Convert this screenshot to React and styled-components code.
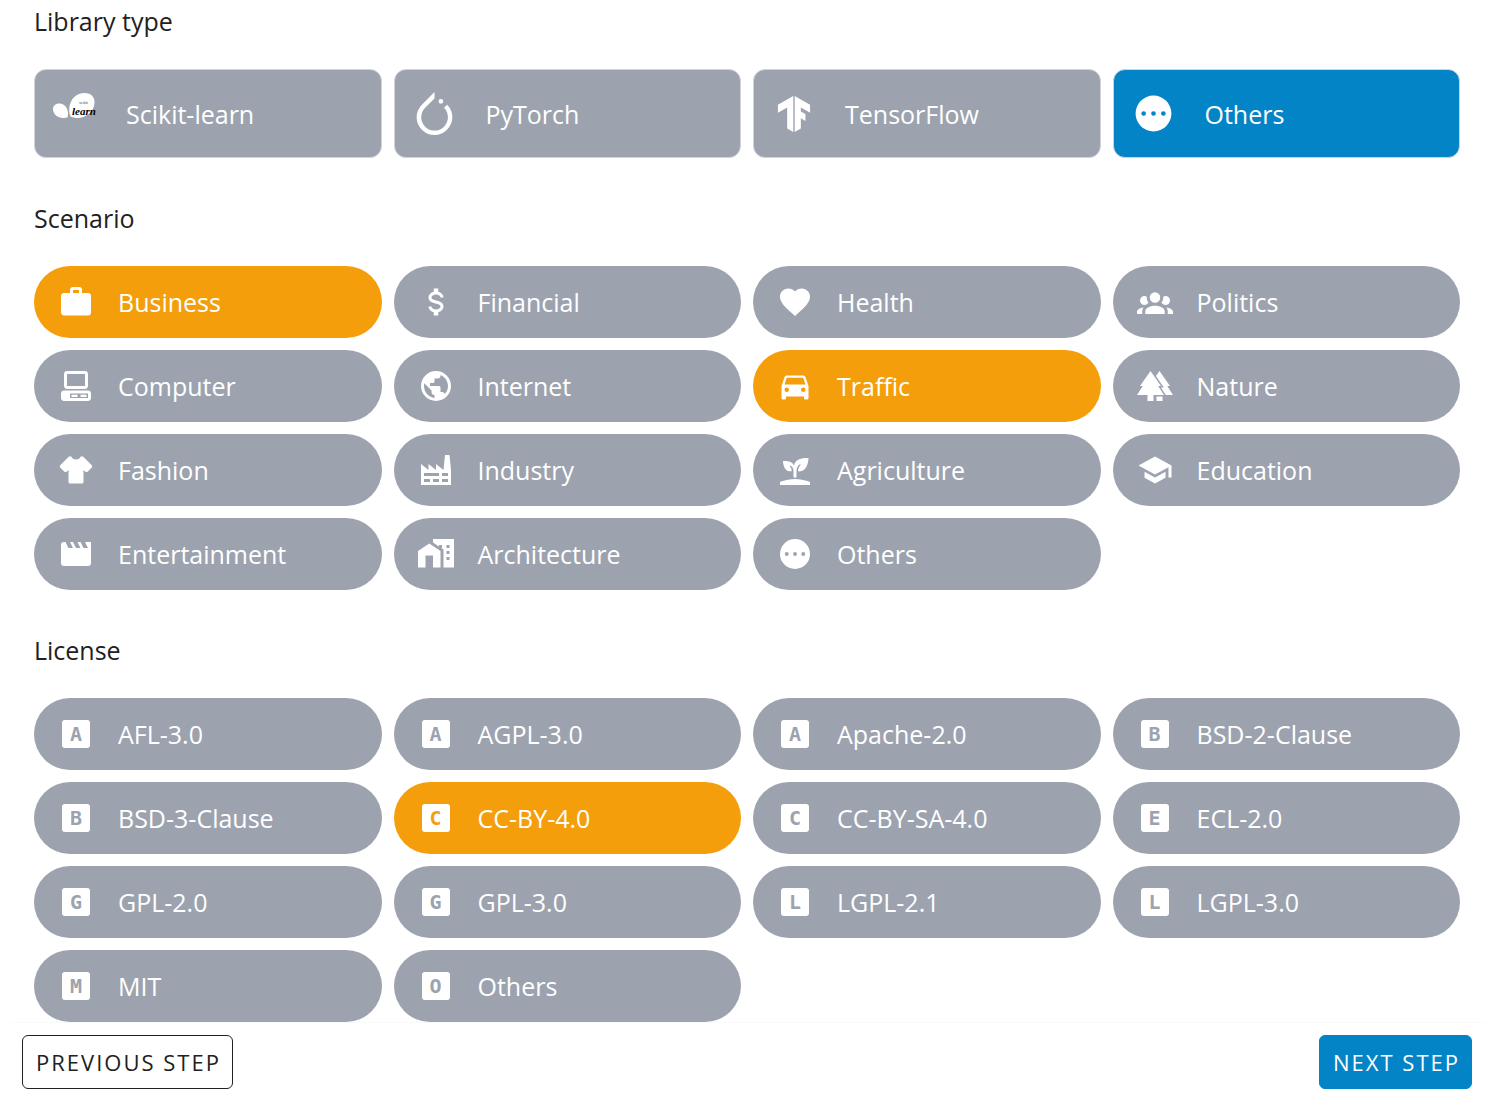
import React, { useState } from "react";
import styled, { createGlobalStyle } from "styled-components";

const GlobalStyle = createGlobalStyle`
  * { box-sizing: border-box; }
  body {
    margin: 0;
    background: #ffffff;
    color: #212121;
    font-family: "Open Sans", "Noto Sans", sans-serif;
  }
`;

const Page = styled.div`
  display: flex;
  flex-direction: column;
`;

const Content = styled.main`
  display: flex;
  flex-direction: column;
  gap: 42px;
  padding: 3px 34px 0;
`;

const Section = styled.section`
  display: flex;
  flex-direction: column;
  gap: 30px;
`;

const SectionTitle = styled.h2`
  margin: 0;
  font-size: 25px;
  line-height: 36px;
  font-weight: 400;
`;

const Options = styled.div`
  display: grid;
  grid-template-columns: repeat(4, minmax(0, 1fr));
  gap: 12px;
`;

const OptionButton = styled.button`
  display: flex;
  align-items: center;
  border: 0;
  color: #ffffff;
  font-family: inherit;
  font-size: 25px;
  line-height: 36px;
  text-align: left;
  white-space: nowrap;
  cursor: pointer;
`;

const LibraryCard = styled(OptionButton)`
  height: 89px;
  gap: 29px;
  padding: 0 18px;
  border: 1px solid #d1d5db;
  border-radius: 12px;
  background: ${(p) => (p.$selected ? "#0284c7" : "#9ca3af")};
`;

const Chip = styled(OptionButton)`
  height: 72px;
  gap: 24px;
  padding: 0 24px;
  border-radius: 36px;
  background: ${(p) => (p.$selected ? "#f59e0b" : "#9ca3af")};
`;

const LogoSlot = styled.span`
  display: flex;
  flex: none;
  align-items: center;
  justify-content: center;
  width: 44px;
  height: 44px;
`;

const Icon = styled.svg`
  flex: none;
  width: ${(p) => p.$size || 36}px;
  height: ${(p) => p.$size || 36}px;
  fill: currentColor;
`;

const LetterSlot = styled.span`
  display: flex;
  flex: none;
  align-items: center;
  justify-content: center;
  width: 36px;
  height: 36px;
`;

const LetterBox = styled.span`
  width: 28px;
  height: 28px;
  border-radius: 3px;
  background: #ffffff;
  color: ${(p) => (p.$selected ? "#f59e0b" : "#9ca3af")};
  font-family: "DejaVu Sans Mono", monospace;
  font-size: 20px;
  line-height: 28px;
  font-weight: 700;
  text-align: center;
`;

const Footer = styled.footer`
  display: flex;
  justify-content: space-between;
  margin: 0 10px;
  padding: 12px;
  border-top: 1px solid #f9fafb;
`;

const StepButton = styled.button`
  height: 54px;
  padding: 0 11px 0 13px;
  border: 1px solid ${(p) => (p.$primary ? "#0284c7" : "#212121")};
  border-radius: 6px;
  background: ${(p) => (p.$primary ? "#0284c7" : "#ffffff")};
  color: ${(p) => (p.$primary ? "#ffffff" : "#212121")};
  font-family: inherit;
  font-size: 22px;
  line-height: 32px;
  letter-spacing: 2px;
  text-transform: uppercase;
  cursor: pointer;
`;

const PATHS = {
  briefcase:
    "M10,2H14A2,2 0 0,1 16,4V6H20A2,2 0 0,1 22,8V19A2,2 0 0,1 20,21H4C2.89,21 2,20.1 2,19V8C2,6.89 2.89,6 4,6H8V4C8,2.89 8.89,2 10,2M14,6V4H10V6H14Z",
  dollar:
    "M7,15H9C9,16.08 10.37,17 12,17C13.63,17 15,16.08 15,15C15,13.9 13.96,13.5 11.76,12.97C9.64,12.44 7,11.78 7,9C7,7.21 8.47,5.69 10.5,5.18V3H13.5V5.18C15.53,5.69 17,7.21 17,9H15C15,7.92 13.63,7 12,7C10.37,7 9,7.92 9,9C9,10.1 10.04,10.5 12.24,11.03C14.36,11.56 17,12.22 17,15C17,16.79 15.53,18.31 13.5,18.82V21H10.5V18.82C8.47,18.31 7,16.79 7,15Z",
  heart:
    "M12,21.35L10.55,20.03C5.4,15.36 2,12.27 2,8.5C2,5.41 4.42,3 7.5,3C9.24,3 10.91,3.81 12,5.08C13.09,3.81 14.76,3 16.5,3C19.58,3 22,5.41 22,8.5C22,12.27 18.6,15.36 13.45,20.03L12,21.35Z",
  people:
    "M12,5.5A3.5,3.5 0 0,1 15.5,9A3.5,3.5 0 0,1 12,12.5A3.5,3.5 0 0,1 8.5,9A3.5,3.5 0 0,1 12,5.5M5,8C5.56,8 6.08,8.15 6.53,8.42C6.38,9.85 6.8,11.27 7.66,12.38C7.16,13.34 6.16,14 5,14A3,3 0 0,1 2,11A3,3 0 0,1 5,8M19,8A3,3 0 0,1 22,11A3,3 0 0,1 19,14C17.84,14 16.84,13.34 16.34,12.38C17.2,11.27 17.62,9.85 17.47,8.42C17.92,8.15 18.44,8 19,8M5.5,18.25C5.5,16.18 8.41,14.5 12,14.5C15.59,14.5 18.5,16.18 18.5,18.25V20H5.5V18.25M0,20V18.5C0,17.11 1.89,15.94 4.45,15.6C3.86,16.28 3.5,17.22 3.5,18.25V20H0M24,20H20.5V18.25C20.5,17.22 20.14,16.28 19.55,15.6C22.11,15.94 24,17.11 24,18.5V20Z",
  computer:
    "M6,2C4.89,2 4,2.89 4,4V12C4,13.11 4.89,14 6,14H18C19.11,14 20,13.11 20,12V4C20,2.89 19.11,2 18,2H6M6,4H18V12H6V4M4,15C2.89,15 2,15.89 2,17V20C2,21.11 2.89,22 4,22H20C21.11,22 22,21.11 22,20V17C22,15.89 21.11,15 20,15H4M8,17H20V20H8V17M9,17.75V19.25H13V17.75H9M15,17.75V19.25H19V17.75H15Z",
  earth:
    "M17.9,17.39C17.64,16.59 16.89,16 16,16H15V13A1,1 0 0,0 14,12H8V10H10A1,1 0 0,0 11,9V7H13A2,2 0 0,0 15,5V4.59C17.93,5.77 20,8.64 20,12C20,14.08 19.2,15.97 17.9,17.39M11,19.93C7.05,19.44 4,16.08 4,12C4,11.38 4.08,10.78 4.21,10.21L9,15V16A2,2 0 0,0 11,18M12,2A10,10 0 0,0 2,12A10,10 0 0,0 12,22A10,10 0 0,0 22,12A10,10 0 0,0 12,2Z",
  car: "M5,11L6.5,6.5H17.5L19,11M17.5,16A1.5,1.5 0 0,1 16,14.5A1.5,1.5 0 0,1 17.5,13A1.5,1.5 0 0,1 19,14.5A1.5,1.5 0 0,1 17.5,16M6.5,16A1.5,1.5 0 0,1 5,14.5A1.5,1.5 0 0,1 6.5,13A1.5,1.5 0 0,1 8,14.5A1.5,1.5 0 0,1 6.5,16M18.92,6C18.72,5.42 18.16,5 17.5,5H6.5C5.84,5 5.28,5.42 5.08,6L3,12V20A1,1 0 0,0 4,21H5A1,1 0 0,0 6,20V19H18V20A1,1 0 0,0 19,21H20A1,1 0 0,0 21,20V12L18.92,6Z",
  forest:
    "M16,12L9,2L2,12H3.86L0,18H7V22H11V18H18L14.14,12H16M20.14,12H22L15,2L12.61,5.41L17.92,13H15.97L19.19,18H24L20.14,12M13,19H17V22H13V19Z",
  shirt:
    "M16,21H8A1,1 0 0,1 7,20V12.07L5.7,13.12C5.31,13.5 4.68,13.5 4.29,13.12L1.46,10.29C1.07,9.9 1.07,9.27 1.46,8.88L7.34,3H9C9,4.1 10.34,5 12,5C13.66,5 15,4.1 15,3H16.66L22.54,8.88C22.93,9.27 22.93,9.9 22.54,10.29L19.71,13.12C19.32,13.5 18.69,13.5 18.3,13.12L17,12.07V20A1,1 0 0,1 16,21",
  factory:
    "M4,18V20H8V18H4M4,14V16H14V14H4M10,18V20H14V18H10M16,14V16H20V14H16M16,18V20H20V18H16M2,22V8L7,12V8L12,12V8L17,12L18,2H21L22,12V22H2Z",
  sprout:
    "M2,22V20C2,20 7,18 12,18C17,18 22,20 22,20V22H2M11.3,9.1C10.1,5.2 4,6.1 4,6.1C4,6.1 4.2,13.9 9.9,12.7C9.5,9.8 8,9 8,9C10.8,9 11,12.4 11,12.4V17C11.3,17 11.7,17 12,17C12.3,17 12.7,17 13,17V12.8C13,12.8 13,8.9 16,7.9C16,7.9 14,10.9 14,12.9C21,13.6 21,4 21,4C21,4 12.1,3 11.3,9.1Z",
  school:
    "M12,3L1,9L12,15L21,10.09V17H23V9M5,13.18V17.18L12,21L19,17.18V13.18L12,17L5,13.18Z",
  movie:
    "M18,4L20,8H17L15,4H13L15,8H12L10,4H8L10,8H7L5,4H4A2,2 0 0,0 2,6V18A2,2 0 0,0 4,20H20A2,2 0 0,0 22,18V4H18Z",
  homeCity:
    "M10,2V4.26L17,8.92V21H24V2H10M7.5,5L0,10V21H5V13H10V21H15V10L7.5,5M14,6V6.93L15.61,8H16V6H14M19,6V8H21V6H19M19,10V12H21V10H19M19,14V16H21V14H19Z",
  dots: "M12,2A10,10 0 1,0 12,22A10,10 0 1,0 12,2M6.5,10.7A1.3,1.3 0 1,1 6.5,13.3A1.3,1.3 0 1,1 6.5,10.7M12,10.7A1.3,1.3 0 1,1 12,13.3A1.3,1.3 0 1,1 12,10.7M17.5,10.7A1.3,1.3 0 1,1 17.5,13.3A1.3,1.3 0 1,1 17.5,10.7Z",
  pytorch:
    "M12.005 0L4.952 7.053a9.865 9.865 0 000 14.022 9.866 9.866 0 0014.022 0c3.984-3.9 3.986-10.205.085-14.023l-1.744 1.743c2.904 2.905 2.904 7.634 0 10.538s-7.634 2.904-10.538 0-2.904-7.634 0-10.538l4.647-4.646.582-.665zm3.568 3.899a1.327 1.327 0 00-1.327 1.327 1.327 1.327 0 001.327 1.328A1.327 1.327 0 0016.9 5.226 1.327 1.327 0 0015.573 3.9z",
  tensorflow:
    "M1.292 5.856L11.54 0v24l-4.095-2.378V7.603l-6.168 3.564.015-5.31zm21.43 5.311l-.014-5.31L12.46 0v24l4.095-2.378V14.87l3.092 1.788-.018-4.618-3.074-1.756V7.603l6.168 3.564z",
};

function Glyph({ name, size }) {
  return (
    <Icon viewBox="0 0 24 24" $size={size} aria-hidden="true">
      <path d={PATHS[name]} fillRule="evenodd" />
    </Icon>
  );
}

function ScikitLogo() {
  return (
    <Icon viewBox="0 0 44 44" $size={44} aria-hidden="true">
      <path d="M14.500 25.500C16.500 18 12.500 11.500 6.500 11.500C2 11.500 0 14 0 17.500C0.500 23 6 27.500 14.500 25.500Z" />
      <path d="M17.500 24.500C13.500 13 20 1 31.500 1C38 1 42 5 41.500 11C41 21 29 29.500 17.500 24.500Z" />
      <text x="26" y="12" fontSize="4" fill="#4b5563" fontFamily="Liberation Sans, sans-serif">
        scikit
      </text>
      <text
        x="19"
        y="23"
        fontSize="11"
        fill="#000000"
        fontWeight="700"
        fontStyle="italic"
        fontFamily="Liberation Serif, serif"
      >
        learn
      </text>
    </Icon>
  );
}

const LIBRARIES = [
  { label: "Scikit-learn", logo: <ScikitLogo /> },
  { label: "PyTorch", logo: <Glyph name="pytorch" size={43} /> },
  { label: "TensorFlow", logo: <Glyph name="tensorflow" size={36} /> },
  { label: "Others", logo: <Glyph name="dots" size={43} /> },
];

const SCENARIOS = [
  ["Business", "briefcase"],
  ["Financial", "dollar"],
  ["Health", "heart"],
  ["Politics", "people"],
  ["Computer", "computer"],
  ["Internet", "earth"],
  ["Traffic", "car"],
  ["Nature", "forest"],
  ["Fashion", "shirt"],
  ["Industry", "factory"],
  ["Agriculture", "sprout"],
  ["Education", "school"],
  ["Entertainment", "movie"],
  ["Architecture", "homeCity"],
  ["Others", "dots"],
];

const LICENSES = [
  "AFL-3.0",
  "AGPL-3.0",
  "Apache-2.0",
  "BSD-2-Clause",
  "BSD-3-Clause",
  "CC-BY-4.0",
  "CC-BY-SA-4.0",
  "ECL-2.0",
  "GPL-2.0",
  "GPL-3.0",
  "LGPL-2.1",
  "LGPL-3.0",
  "MIT",
  "Others",
];

export default function App() {
  const [library, setLibrary] = useState("Others");
  const [scenarios, setScenarios] = useState(["Business", "Traffic"]);
  const [license, setLicense] = useState("CC-BY-4.0");

  const toggleScenario = (label) =>
    setScenarios((list) =>
      list.includes(label) ? list.filter((s) => s !== label) : [...list, label]
    );

  return (
    <Page>
      <GlobalStyle />
      <Content>
        <Section>
          <SectionTitle>Library type</SectionTitle>
          <Options>
            {LIBRARIES.map(({ label, logo }) => (
              <LibraryCard
                key={label}
                type="button"
                $selected={library === label}
                aria-pressed={library === label}
                onClick={() => setLibrary(label)}
              >
                <LogoSlot>{logo}</LogoSlot>
                {label}
              </LibraryCard>
            ))}
          </Options>
        </Section>

        <Section>
          <SectionTitle>Scenario</SectionTitle>
          <Options>
            {SCENARIOS.map(([label, icon]) => (
              <Chip
                key={label}
                type="button"
                $selected={scenarios.includes(label)}
                aria-pressed={scenarios.includes(label)}
                onClick={() => toggleScenario(label)}
              >
                <Glyph name={icon} />
                {label}
              </Chip>
            ))}
          </Options>
        </Section>

        <Section>
          <SectionTitle>License</SectionTitle>
          <Options>
            {LICENSES.map((label) => (
              <Chip
                key={label}
                type="button"
                $selected={license === label}
                aria-pressed={license === label}
                onClick={() => setLicense(label)}
              >
                <LetterSlot aria-hidden="true">
                  <LetterBox $selected={license === label}>{label[0]}</LetterBox>
                </LetterSlot>
                {label}
              </Chip>
            ))}
          </Options>
        </Section>
      </Content>
      <Footer>
        <StepButton type="button">Previous step</StepButton>
        <StepButton type="button" $primary>
          Next step
        </StepButton>
      </Footer>
    </Page>
  );
}
